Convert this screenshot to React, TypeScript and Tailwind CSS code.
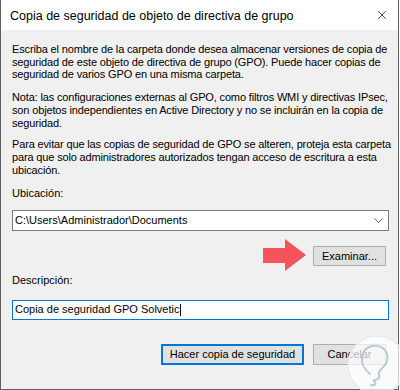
import { X } from 'lucide-react'

const font = { fontFamily: '"Liberation Sans", Arial, sans-serif' }

function Chevron() {
  return (
    <svg width="9" height="5" viewBox="0 0 9 5" className="shrink-0">
      <path d="M0.5 0.5 L4.5 4.5 L8.5 0.5" fill="none" stroke="#606060" strokeWidth="1" />
    </svg>
  )
}

function Arrow() {
  return (
    <svg width="46" height="34" viewBox="0 0 46 34" className="absolute left-[261px] top-[238px]">
      <path d="M1 10 L23 10 L23 1 L44 17 L23 33 L23 25 L1 25 Z" fill="#f4545a" />
    </svg>
  )
}

function Watermark() {
  return (
    <svg width="62" height="62" viewBox="0 0 62 62" className="absolute left-[345px] top-[334px]">
      <circle cx="31" cy="31" r="29" fill="#ffffff" fillOpacity="0.7" stroke="#e3eaf0" strokeWidth="1.5" />
      <path
        d="M24 40 C18 35 15 30 16 23 C17 15 24 11 31 12 C39 13 43 20 41 27 C40 32 35 34 33 38 C32 41 35 43 32 45 C29 47 26 45 29 48 C31 50 27 52 25 51"
        fill="none"
        stroke="#b9cbd9"
        strokeWidth="2"
        strokeLinecap="round"
      />
    </svg>
  )
}

export default function App() {
  return (
    <div
      className="relative w-[399px] h-[390px] bg-[#f0f0f0] border-l border-r border-b border-[#606060] text-black text-[11px] leading-[12.7px]"
      style={font}
    >
      {/* Title bar */}
      <div className="h-[30px] bg-white flex items-center justify-between pl-[9px] pr-[9px]">
        <span className="text-[12.5px] leading-[16px] pt-[1px]">Copia de seguridad de objeto de directiva de grupo</span>
        <X className="w-[14px] h-[14px] text-black" strokeWidth={1.2} />
      </div>

      <div className="px-[11px] pt-[13px]">
        <div className="tracking-[-0.15px]">
          <p className="whitespace-nowrap">
            Escriba el nombre de la carpeta donde desea almacenar versiones de copia de
            <br />
            seguridad de este objeto de directiva de grupo (GPO). Puede hacer copias de
            <br />
            seguridad de varios GPO en una misma carpeta.
          </p>
          <p className="mt-[10px] whitespace-nowrap">
            Nota: las configuraciones externas al GPO, como filtros WMI y directivas IPsec,
            <br />
            son objetos independientes en Active Directory y no se incluirán en la copia de
            <br />
            seguridad.
          </p>
          <p className="mt-[9px] whitespace-nowrap">
            Para evitar que las copias de seguridad de GPO se alteren, proteja esta carpeta
            <br />
            para que solo administradores autorizados tengan acceso de escritura a esta
            <br />
            ubicación.
          </p>
        </div>

        <div className="mt-[11px]">Ubicación:</div>
        <div className="mt-[10px] h-[21px] w-[377px] bg-white border border-[#7a7a7a] flex items-center justify-between pl-[2px] pr-[5px]">
          <span>C:\Users\Administrador\Documents</span>
          <Chevron />
        </div>

        <div className="mt-[15px] flex justify-end pr-[1px]">
          <button className="w-[73px] h-[20px] bg-[#e1e1e1] border border-[#adadad] flex items-center justify-center">
            Examinar...
          </button>
        </div>

        <div className="mt-[8px]">Descripción:</div>
        <div className="mt-[13px] h-[20px] w-[377px] bg-white border border-[#0078d7] flex items-center pl-[2px]">
          <span>Copia de seguridad GPO Solvetic</span>
          <span className="inline-block w-px h-[12px] bg-black ml-px" />
        </div>

        <div className="mt-[24px] flex justify-end gap-[9px] pr-[1px]">
          <button className="w-[143px] h-[21px] bg-[#e1e1e1] border-2 border-[#0078d7] flex items-center justify-center">
            Hacer copia de seguridad
          </button>
          <button className="w-[73px] h-[21px] bg-[#e1e1e1] border border-[#adadad] flex items-center justify-center">
            Cancelar
          </button>
        </div>
      </div>

      <Arrow />
      <Watermark />
    </div>
  )
}
